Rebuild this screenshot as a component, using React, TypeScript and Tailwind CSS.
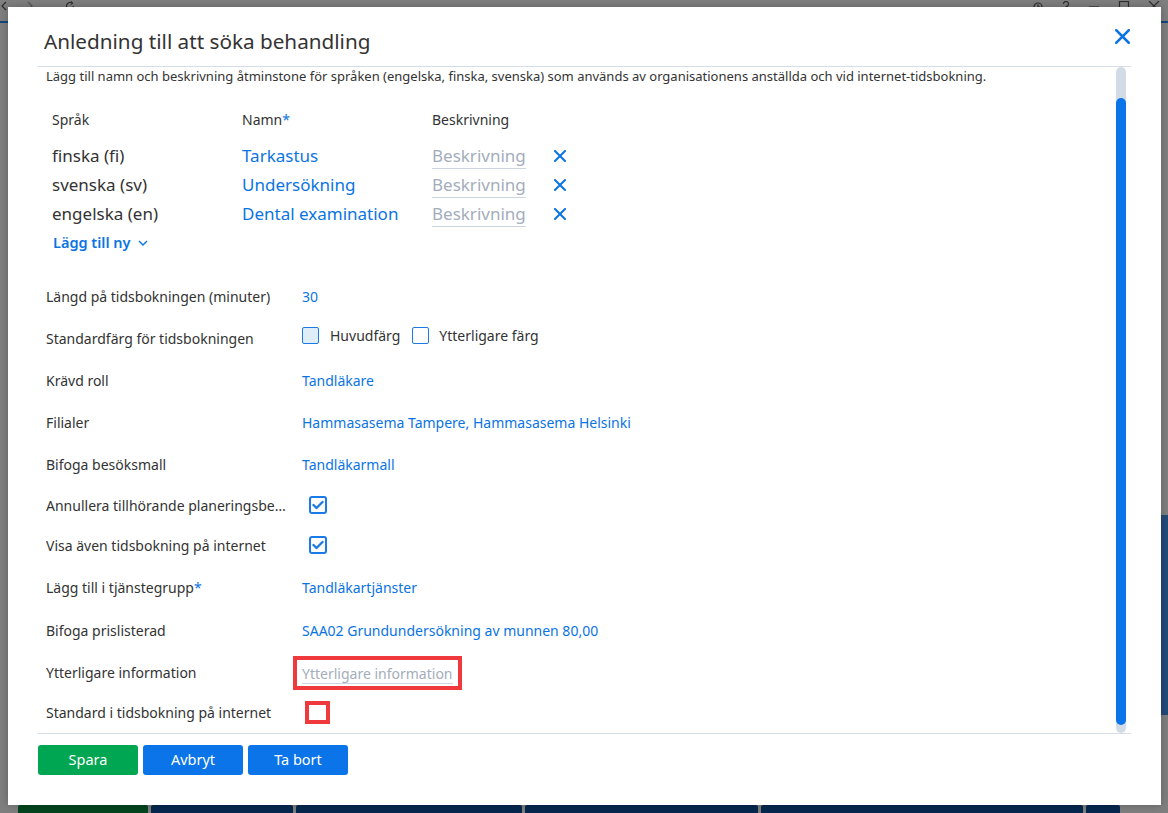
import React from "react";

const BLUE = "text-[#0a74e3]";

function Cross({ size = 12, stroke = 2 }: { size?: number; stroke?: number }) {
  return (
    <svg width={size} height={size} viewBox="0 0 12 12" fill="none">
      <path d="M1 1L11 11M11 1L1 11" stroke="#0a74e3" strokeWidth={stroke} strokeLinecap="square" />
    </svg>
  );
}

function Check() {
  return (
    <span className="flex h-[18px] w-[18px] items-center justify-center rounded-[3px] border-2 border-[#1b7ae6] bg-white">
      <svg width="12" height="10" viewBox="0 0 12 10" fill="none">
        <path d="M1.5 5L4.5 8L10.5 2" stroke="#1b7ae6" strokeWidth="2.4" strokeLinecap="round" strokeLinejoin="round" />
      </svg>
    </span>
  );
}

function Row({
  label,
  children,
  req,
  h = "h-[42px]",
}: {
  label: string;
  children: React.ReactNode;
  req?: boolean;
  h?: string;
}) {
  return (
    <div className={`flex items-center ${h}`}>
      <div className="w-[256px] shrink-0 truncate pr-[10px] text-[14px] text-[#333]">
        {label}
        {req && <span className={BLUE}>*</span>}
      </div>
      <div className="flex items-center">{children}</div>
    </div>
  );
}

const langs = [
  { lang: "finska (fi)", name: "Tarkastus" },
  { lang: "svenska (sv)", name: "Undersökning" },
  { lang: "engelska (en)", name: "Dental examination" },
];

const stroke = { stroke: "#2e2e2e", strokeWidth: 1.2, fill: "none" } as const;

export default function App() {
  return (
    <div className="relative h-[813px] w-[1168px] overflow-hidden bg-[#7f7f7f] font-['Noto_Sans',sans-serif]">
      {/* dimmed window chrome behind the dialog */}
      <div className="flex h-[21px] items-start justify-between">
        <div className="flex items-start gap-[20px] pl-[1px] pt-[1px]">
          <svg width="6" height="10" viewBox="0 0 6 10">
            <path d="M5 1L1 5L5 9" {...stroke} />
          </svg>
          <svg width="6" height="10" viewBox="0 0 6 10">
            <path d="M1 1L5 5L1 9" stroke="#555" strokeWidth="1.2" fill="none" />
          </svg>
          <svg width="10" height="10" viewBox="0 0 10 10" className="ml-[12px]">
            <path d="M8.5 5A3.5 3.5 0 1 1 6.5 1.8" {...stroke} />
            <path d="M6 0.5L7.5 2L6 3.5" {...stroke} />
          </svg>
        </div>
        <div className="flex items-start gap-[18px] pr-[8px] pt-[1px]">
          <svg width="12" height="10" viewBox="0 0 12 10">
            <circle cx="6" cy="6" r="4" {...stroke} />
            <path d="M6 3.5V6H8" {...stroke} />
          </svg>
          <svg width="8" height="10" viewBox="0 0 8 10">
            <path d="M1.5 3A2.5 2.5 0 1 1 4 5.5V7" {...stroke} />
          </svg>
          <svg width="12" height="10" viewBox="0 0 12 10">
            <path d="M1 6H11" {...stroke} />
          </svg>
          <svg width="12" height="10" viewBox="0 0 12 10">
            <rect x="1.5" y="0.5" width="9" height="9" {...stroke} />
          </svg>
          <svg width="12" height="10" viewBox="0 0 12 10">
            <path d="M1 0L11 10M11 0L1 10" {...stroke} />
          </svg>
        </div>
      </div>
      <div className="h-[2px] bg-[#13467e]" />
      <div className="absolute bottom-0 left-0 right-0 flex h-[8px] gap-[3px] pl-[18px]">
        <div className="w-[130px] rounded-t-[2px] bg-[#03451f]" />
        <div className="w-[142px] rounded-t-[2px] bg-[#06274f]" />
        <div className="w-[226px] rounded-t-[2px] bg-[#06274f]" />
        <div className="w-[233px] rounded-t-[2px] bg-[#06274f]" />
        <div className="w-[322px] rounded-t-[2px] bg-[#06274f]" />
        <div className="w-[34px] rounded-t-[2px] bg-[#06274f]" />
      </div>
      <div className="absolute right-0 top-[515px] h-[200px] w-[7px] bg-[#234a78]" />

      {/* dialog */}
      <div className="absolute left-[8px] top-[7px] flex h-[798px] w-[1153px] flex-col bg-white px-[30px] shadow-[0_0_8px_rgba(0,0,0,0.25)]">
        <div className="flex h-[60px] shrink-0 items-center justify-between border-b border-[#d5dde6] pl-[6px] pr-[2px]">
          <h1 className="mt-[11px] text-[20.7px] font-normal text-[#333]">Anledning till att söka behandling</h1>
          <button className="-mr-[1px] mt-[-1px]">
            <Cross size={15} stroke={2} />
          </button>
        </div>

        <div className="flex h-[666px] shrink-0">
          <div className="flex-1 pl-[8px]">
            <p className="mt-[1px] text-[13px] leading-[16px] text-[#333]">
              Lägg till namn och beskrivning åtminstone för språken (engelska, finska, svenska) som används av organisationens anställda och vid internet-tidsbokning.
            </p>

            <div className="mt-[24px] pl-[6px]">
              <div className="flex h-[22px] items-center text-[14px] text-[#333]">
                <div className="w-[190px]">Språk</div>
                <div className="w-[190px]">
                  Namn<span className={BLUE}>*</span>
                </div>
                <div>Beskrivning</div>
              </div>
              <div className="mt-[11px]">
                {langs.map((l) => (
                  <div key={l.lang} className="flex h-[29px] items-center text-[17px]">
                    <div className="w-[190px] text-[#333]">{l.lang}</div>
                    <div className={`w-[190px] ${BLUE}`}>{l.name}</div>
                    <div className="w-[122px]">
                      <span className="border-b border-[#cdd5de] pb-[1px] text-[#a3adbb]">Beskrivning</span>
                    </div>
                    <Cross />
                  </div>
                ))}
              </div>
              <div className={`flex h-[29px] items-center gap-[7px] pl-[1px] text-[14.5px] font-semibold ${BLUE}`}>
                Lägg till ny
                <svg width="10" height="6" viewBox="0 0 10 6" fill="none">
                  <path d="M1 1L5 5L9 1" stroke="#0a74e3" strokeWidth="1.4" />
                </svg>
              </div>
            </div>

            <div className="mt-[18px]">
              <Row label="Längd på tidsbokningen (minuter)">
                <span className={`text-[14px] ${BLUE}`}>30</span>
              </Row>
              <Row label="Standardfärg för tidsbokningen">
                <div className="-mt-[5px] flex items-center text-[14px] text-[#333]">
                  <span className="h-[17px] w-[17px] rounded-[2px] border-[1.5px] border-[#1b7ae6] bg-[#deedf8]" />
                  <span className="ml-[11px]">Huvudfärg</span>
                  <span className="ml-[12px] h-[17px] w-[17px] rounded-[2px] border-[1.5px] border-[#1b7ae6] bg-white" />
                  <span className="ml-[10px]">Ytterligare färg</span>
                </div>
              </Row>
              <Row label="Krävd roll">
                <span className={`text-[14px] ${BLUE}`}>Tandläkare</span>
              </Row>
              <Row label="Filialer">
                <span className={`text-[14px] ${BLUE}`}>Hammasasema Tampere, Hammasasema Helsinki</span>
              </Row>
              <Row label="Bifoga besöksmall">
                <span className={`text-[14px] ${BLUE}`}>Tandläkarmall</span>
              </Row>
              <Row label="Annullera tillhörande planeringsbesök" h="h-[40px]">
                <span className="ml-[7px]">
                  <Check />
                </span>
              </Row>
              <Row label="Visa även tidsbokning på internet" h="h-[40px]">
                <span className="ml-[7px]">
                  <Check />
                </span>
              </Row>
              <Row label="Lägg till i tjänstegrupp" req h="h-[44px]">
                <span className={`text-[14px] ${BLUE}`}>Tandläkartjänster</span>
              </Row>
              <Row label="Bifoga prislisterad">
                <span className={`text-[14px] ${BLUE}`}>SAA02 Grundundersökning av munnen 80,00</span>
              </Row>
              <Row label="Ytterligare information">
                <span className="-ml-[9px] mt-[1px] border-[4px] border-[#f0393d] px-[5px] py-[1px]">
                  <span className="border-b border-[#cdd5de] text-[14px] text-[#a3adbb]">Ytterligare information</span>
                </span>
              </Row>
              <Row label="Standard i tidsbokning på internet" h="h-[38px]">
                <span className="ml-[3px] flex h-[23px] w-[25px] items-center justify-center border-[4px] border-[#f0393d] bg-white" />
              </Row>
            </div>
          </div>

          {/* scrollbar */}
          <div className="relative ml-[2px] mr-[5px] w-[10px] rounded-full bg-[#d3dce6]">
            <div className="absolute bottom-[8px] left-0 right-0 top-[31px] rounded-full bg-[#0a74e8]" />
          </div>
        </div>

        <div className="flex shrink-0 gap-[5px] border-t border-[#d5dde6] pt-[11px]">
          <button className="h-[30px] w-[100px] rounded-[3px] bg-[#00a651] text-[14.5px] text-white">Spara</button>
          <button className="h-[30px] w-[100px] rounded-[3px] bg-[#0a74e8] text-[14.5px] text-white">Avbryt</button>
          <button className="h-[30px] w-[100px] rounded-[3px] bg-[#0a74e8] text-[14.5px] text-white">Ta bort</button>
        </div>
      </div>
    </div>
  );
}
